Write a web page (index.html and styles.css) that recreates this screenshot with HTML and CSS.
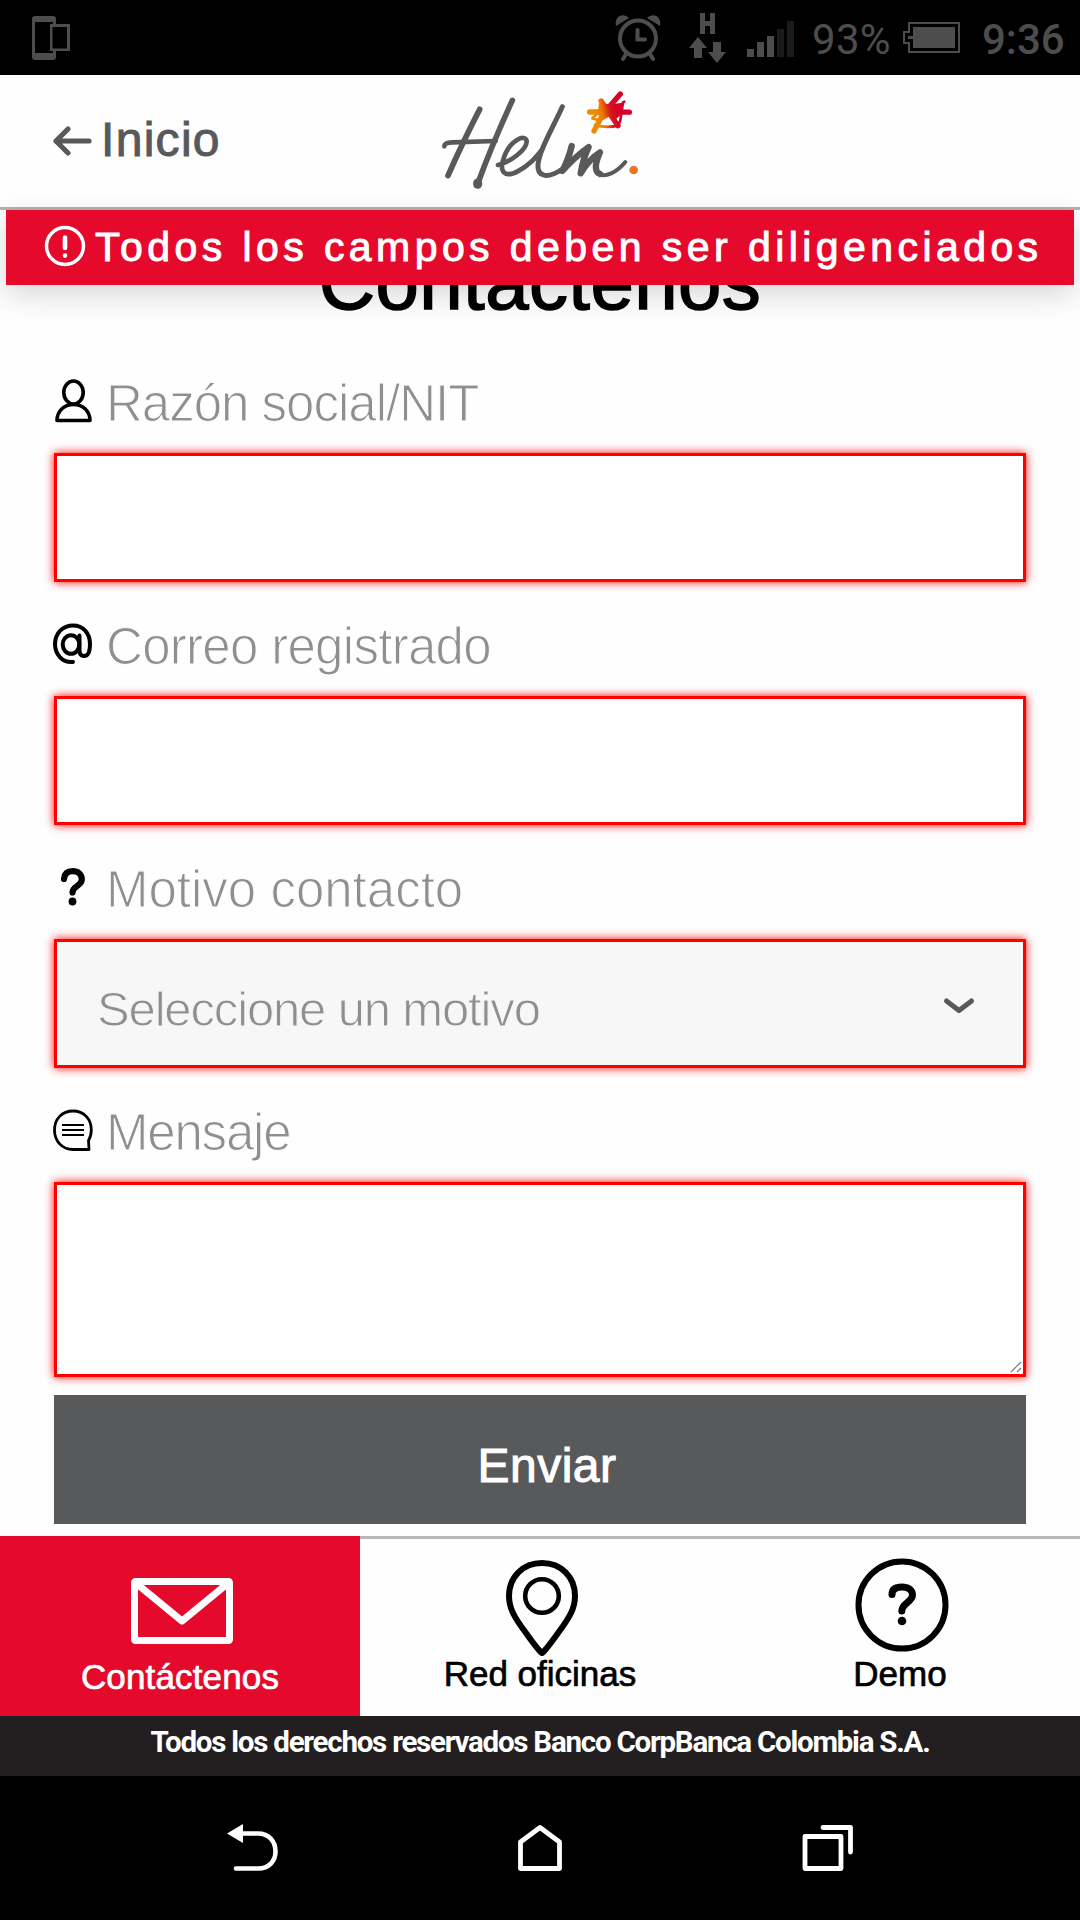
FILE: index.html
```html
<!DOCTYPE html>
<html lang="es">
<head>
<meta charset="utf-8">
<title>Contáctenos</title>
<link rel="stylesheet" href="styles.css">
</head>
<body>
<div class="status">
  <svg class="status-device" width="38" height="44" viewBox="0 0 38 44" fill="#4d4d4d"><path fill-rule="evenodd" d="M3 0H21Q24 0 24 3V8H38V35H24V41Q24 44 21 44H3Q0 44 0 41V3Q0 0 3 0ZM3 6V37H21V35H18V8H21V6ZM20.500 11V32.500H35V11Z"/></svg>
  <svg class="status-alarm" width="46" height="46" viewBox="0 0 46 46" fill="none" stroke="#4d4d4d" stroke-linecap="round"><circle cx="23" cy="23.500" r="18" stroke-width="4"/><path d="M22.500 15V24.500H30" stroke-width="4"/><path d="M11 39L8 44M35 39L38 44" stroke-width="4"/><path d="M1 11C-1 1 8-3 14 3ZM45 11C47 1 38-3 32 3Z" fill="#4d4d4d" stroke="none"/></svg>
  <svg class="status-data" width="38" height="50" viewBox="0 0 38 50" fill="#4d4d4d"><path d="M11 0H16V8H21V0H26V21H21V13H16V21H11Z"/><path d="M9 24L18 35H13V45H5V35H0ZM24 29H32V39H37L28 50L19 39H24Z"/></svg>
  <svg class="status-signal" width="48" height="36" viewBox="0 0 48 36" fill="#4d4d4d"><path d="M0 28H7V36H0ZM10 21H17V36H10ZM20 15H27V36H20Z"/><path fill="#1b1b1b" d="M30 8H37V36H30ZM40 0H47V36H40Z"/></svg>
  <span class="status-percent">93%</span>
  <svg class="status-battery" width="57" height="31" viewBox="0 0 57 31"><path d="M6 1H56V30H6V21H1V10H6Z" fill="none" stroke="#4d4d4d" stroke-width="2"/><path d="M10 5H52V26H10V17H5V14H10Z" fill="#4d4d4d"/></svg>
  <span class="status-time">9:36</span>
</div>

<header class="header">
  <a class="back">
    <svg width="40" height="30" viewBox="0 0 40 30" fill="none" stroke="#58595b" stroke-width="5.200" stroke-linecap="round" stroke-linejoin="round"><path d="M15 3L3 15L15 27M3 15H36"/></svg>
    <span>Inicio</span>
  </a>
  <svg class="logo" width="200" height="104" viewBox="60 50 600 312" fill="none" stroke="#58595b" stroke-linecap="round" stroke-linejoin="round">
    <defs><linearGradient id="spark" gradientUnits="userSpaceOnUse" x1="530" y1="140" x2="600" y2="125"><stop offset="0" stop-color="#f08a00"/><stop offset=".3" stop-color="#ee7a05"/><stop offset=".65" stop-color="#d5161c"/><stop offset="1" stop-color="#d4002a"/></linearGradient></defs>
    <path stroke-width="17" d="M182 117Q128 222 87 316M280 90Q218 225 177 338"/>
    <path stroke-width="14" d="M76 228Q76 217 100 216L230 212"/>
    <path stroke-width="27" d="M176 338V342"/>
    <path stroke-width="14" d="M237 284C272 276 325 238 323 212C319 190 275 208 256 258C237 306 259 323 296 303C335 282 352 259 369 238"/>
    <path stroke-width="15" d="M430 109C397 181 362 238 357 282C354 319 384 327 431 296"/>
    <path stroke-width="19" d="M458 227Q450 263 430 302Q465 262 509 230Q493 262 485 309Q511 266 543 246Q518 302 543 311"/>
    <path stroke-width="12" d="M534 309C558 326 595 304 619 275"/>
    <circle cx="644" cy="299" r="13" fill="#ee7623" stroke="none"/>
    <g stroke="url(#spark)"><path stroke="none" fill="url(#spark)" d="M540 98L574 102L606 98L606 134L588 148L572 138L552 150L536 132Z"/><path stroke-width="16" d="M604 71L568 112M546 92L597 166M512 125L631 125.500M560 116L525 182"/><path stroke-width="8" d="M616 94L584 126M612 96L604 150L597 168M520 144L556 112M528 164Q560 174 598 166M524 145L545 152"/></g>
  </svg>
</header>

<div class="alert">
  <svg width="42" height="42" viewBox="0 0 42 42" fill="none" stroke="#fff" stroke-linecap="round"><circle cx="21" cy="21" r="18.500" stroke-width="3.500"/><path stroke-width="4.600" d="M21 12.500V23M21 30.500V30.600"/></svg>
  <span>Todos los campos deben ser diligenciados</span>
</div>

<main class="form">
  <h1>Contáctenos</h1>

  <label class="label razon" for="razon">
    <svg width="40" height="44" viewBox="0 0 40 44" fill="none" stroke="#000" stroke-width="3.600" stroke-linejoin="round"><ellipse cx="20.500" cy="13.500" rx="9.700" ry="11.500"/><path d="M4 41.500C4 32 11 25.500 20.500 25.500C30 25.500 37 32 37 41.500Z"/></svg>
    <span>Razón social/NIT</span>
  </label>
  <input class="field" id="razon">

  <label class="label correo" for="correo">
    <svg width="40" height="44" viewBox="0 0 40 44" fill="none" stroke="#000" stroke-width="4" stroke-linecap="round"><path d="M20 40C9 41 2 32 2 22C2 11 10 3.500 20 3.500C30 3.500 37 11 37 22C37 30 34.500 34 31 34C28 34 26.500 31.500 26.500 28V13.500"/><ellipse cx="18" cy="22.500" rx="8.300" ry="9.300"/></svg>
    <span>Correo registrado</span>
  </label>
  <input class="field" id="correo">

  <div class="label motivo">
    <svg width="40" height="44" viewBox="0 0 40 44" fill="none" stroke="#000" stroke-width="6.200" stroke-linecap="round" stroke-linejoin="round"><path d="M11 14C11.500 8.500 15 6.200 19.500 6.200C25 6.200 28.800 9 28.800 14.500C28.800 21 19.500 21 19.500 27.500"/><circle cx="19.500" cy="36.500" r="3.900" fill="#000" stroke="none"/></svg>
    <span>Motivo contacto</span>
  </div>
  <div class="field select">
    <span>Seleccione un motivo</span>
    <svg width="32" height="18" viewBox="0 0 32 18" fill="none" stroke="#58595b" stroke-width="5" stroke-linecap="round" stroke-linejoin="round"><path d="M3.500 4L16 13.500L28.500 4"/></svg>
  </div>

  <label class="label mensaje" for="mensaje">
    <svg width="40" height="44" viewBox="0 0 40 44" fill="none" stroke="#000"><path stroke-width="2.800" stroke-linejoin="round" d="M36 41.500H20C9 41.500 1.500 33 1.500 22C1.500 11 9 3 20 3C31 3 38.300 11 38.300 22Q38.300 28 35.500 32.500Z"/><path stroke-width="2.200" d="M9 17H31M9 22H31M9 27H31"/></svg>
    <span>Mensaje</span>
  </label>
  <div class="message">
    <textarea class="field area" id="mensaje"></textarea>
    <svg class="grip" width="12" height="12" viewBox="0 0 12 12" stroke="#777" stroke-width="1.200"><path d="M1 11L11 1M7 11L11 7"/></svg>
  </div>

  <button class="send">Enviar</button>
</main>

<nav class="tabs">
  <a class="tab active">
    <svg width="102" height="66" viewBox="0 0 102 66" fill="none" stroke="#fff" stroke-width="7" stroke-linejoin="round"><rect x="3.500" y="3.500" width="95" height="59" rx="1"/><path d="M6 6L51 43L96 6"/></svg>
    <span>Contáctenos</span>
  </a>
  <a class="tab offices">
    <svg width="72" height="97" viewBox="0 0 72 97" fill="none" stroke="#000" stroke-linejoin="round"><path stroke-width="6" d="M36 93Q32 90 20 73C8 57 3 48 3 36C3 17 17 3 36 3C55 3 69 17 69 36C69 48 64 57 52 73Q40 90 36 93Z"/><circle cx="36" cy="36" r="16.800" stroke-width="4.600"/></svg>
    <span>Red oficinas</span>
  </a>
  <a class="tab demo">
    <svg width="94" height="94" viewBox="0 0 94 94" fill="none" stroke="#000" stroke-linecap="round"><circle cx="47" cy="47" r="43.500" stroke-width="6"/><path stroke-width="7" d="M37 36.500C37 31 41 29 47 29C53 29 57.500 32 57.500 37C57.500 44 46.800 45 46.800 53"/><circle cx="47" cy="63" r="4.300" fill="#000" stroke="none"/></svg>
    <span>Demo</span>
  </a>
</nav>

<footer class="legal">Todos los derechos reservados Banco CorpBanca Colombia S.A.</footer>

<div class="softkeys">
  <svg width="52" height="48" viewBox="0 0 52 48" fill="none" stroke="#fff" stroke-linecap="round"><path stroke-width="4.600" d="M14 9.500H31C42 9.500 48.500 17.500 48.500 27.500C48.500 37 42 44.500 31 44.500H9"/><path d="M0 9.500L16 0V19Z" fill="#fff" stroke="none"/></svg>
  <svg width="46" height="48" viewBox="1 0 46 48" fill="none" stroke="#fff" stroke-width="4.800" stroke-linejoin="round"><path d="M3.500 18L23 3.500L42.500 18V44.500H3.500Z"/></svg>
  <svg width="52" height="48" viewBox="0 0 52 48" fill="none" stroke="#fff" stroke-width="4.800" stroke-linecap="round" stroke-linejoin="round"><path d="M3 12.500H39V44.500H3ZM21 3.500H48.500V28"/></svg>
</div>
</body>
</html>
```
FILE: styles.css
```css
* { box-sizing: border-box; }

body {
  margin: 0;
  width: 1080px;
  height: 1920px;
  overflow: hidden;
  position: relative;
  display: flex;
  flex-direction: column;
  background: #fefefe;
  font-family: "Liberation Sans", Arial, sans-serif;
}

svg { display: block; flex: none; overflow: visible; }

.status {
  height: 75px;
  flex: none;
  display: flex;
  align-items: flex-start;
  padding-left: 32px;
  background: #000;
  color: #4d4d4d;
  font: 42px/49px Roboto, sans-serif;
}
.status-device { margin-top: 16px; }
.status-alarm { margin: 15px 0 0 545px; }
.status-data { margin: 13px 0 0 28px; }
.status-signal { margin: 21px 0 0 20px; }
.status-percent { margin: 15px 0 0 17px; width: 76px; letter-spacing: .300px; white-space: nowrap; }
.status-battery { margin: 22px 0 0 15px; }
.status-time { margin: 15px 0 0 22px; font-weight: 500; }

.header {
  height: 135px;
  flex: none;
  display: flex;
  align-items: flex-start;
  border-bottom: 3px solid #b2b2b2;
  padding-left: 53px;
}
.back {
  display: flex;
  width: 386px;
  padding-top: 37px;
  color: #58595b;
  font-size: 48px;
  line-height: 56px;
  letter-spacing: 1.300px;
  -webkit-text-stroke: 1px #58595b;
}
.back svg { margin-top: 14px; }
.back span { margin-left: 8px; }
.logo { margin-top: 12px; }

/* Floats above the header and the scrolled form */
.alert {
  position: absolute;
  left: 6px;
  top: 210px;
  width: 1068px;
  height: 75px;
  z-index: 2;
  display: flex;
  align-items: center;
  padding-left: 38px;
  background: #e5092c;
  color: #fff;
  font-size: 41px;
  letter-spacing: 4.430px;
  white-space: nowrap;
  -webkit-text-stroke: 1px #fff;
  box-shadow: 0 9px 30px rgba(0, 0, 0, .16);
}
.alert svg { margin-bottom: 3px; }
.alert span { margin-left: 9px; }

.form {
  height: 1326px;
  flex: none;
  display: flex;
  flex-direction: column;
  padding: 0 54px;
}
h1 {
  margin: 0;
  height: 129px;
  padding-top: 27px;
  text-align: center;
  font-size: 78px;
  line-height: 90px;
  font-weight: 400;
  letter-spacing: .400px;
  -webkit-text-stroke: 1.500px #000;
}

.label {
  height: 114px;
  display: flex;
  padding: 40px 0 0;
  color: #8f8f8f;
  font-size: 51px;
  line-height: 50px;
  -webkit-text-stroke: 1.100px #fefefe;
}
.label svg { margin-left: -1px; }
.label span { margin-left: 13px; }
.razon span { letter-spacing: -1px; }
.correo span { letter-spacing: -.700px; }
.motivo span { letter-spacing: 0; }
.mensaje span { letter-spacing: -1.200px; }

.field {
  display: block;
  width: 100%;
  height: 129px;
  margin: 0;
  border: 3px solid #f00;
  border-radius: 0;
  background: #fff;
  box-shadow: 0 0 9px #f00;
  outline: none;
}
.select {
  display: flex;
  justify-content: space-between;
  align-items: center;
  padding: 10px 48px 0 40px;
  background: #f7f7f7;
  color: #8f8f8f;
  font-size: 49px;
  letter-spacing: -1.150px;
  -webkit-text-stroke: 1px #f7f7f7;
}
.select svg { margin-bottom: 6px; }
.message { position: relative; }
.area { height: 195px; resize: none; }
.grip { position: absolute; right: 4px; bottom: 4px; }

.send {
  height: 129px;
  margin: 18px 0 0;
  padding: 12px 0 0 14px;
  border: 0;
  background: #58595b;
  color: #fff;
  font: 48px "Liberation Sans", Arial, sans-serif;
  letter-spacing: .500px;
  -webkit-text-stroke: 1px #fff;
}

.tabs {
  height: 180px;
  flex: none;
  display: grid;
  grid-template-columns: repeat(3, 1fr);
}
.tab {
  display: flex;
  flex-direction: column;
  align-items: center;
  border-top: 3px solid #b7b7b7;
  font-size: 35px;
  line-height: 40px;
  -webkit-text-stroke: .700px;
}
.active {
  border-color: #e5092c;
  background: #e5092c;
  color: #fff;
  letter-spacing: .150px;
}
.active svg { margin: 39px 0 13px 4px; }
.offices svg { margin: 21px 0 -3px 4px; }
.demo svg { margin: 19px 0 2px 4px; }

.legal {
  height: 60px;
  flex: none;
  text-align: center;
  background: #231f20;
  color: #fff;
  font: 700 29.500px/52px Roboto, sans-serif;
  letter-spacing: -1.240px;
}

.softkeys {
  flex: 1;
  display: flex;
  justify-content: space-between;
  padding: 48px 226px 0 227px;
  background: #000;
}
```
